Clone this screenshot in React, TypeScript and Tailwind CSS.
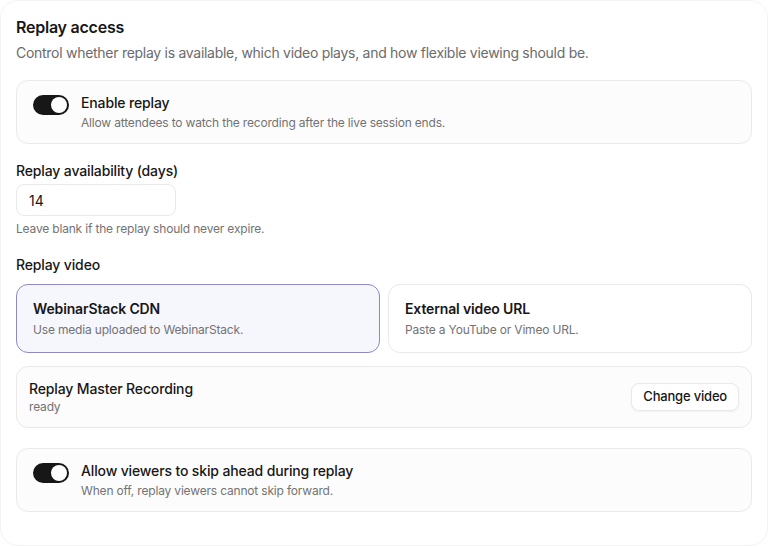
import { useState } from "react";

const Toggle = ({ on, onToggle }: { on: boolean; onToggle: () => void }) => (
  <button
    type="button"
    onClick={onToggle}
    className={`mt-0.5 flex h-5 w-9 shrink-0 items-center rounded-full p-0.5 ${
      on ? "bg-[#171717]" : "bg-[#d4d4d4]"
    }`}
  >
    <span
      className={`h-4 w-4 rounded-full bg-white shadow-sm ${on ? "ml-4" : "ml-0"}`}
    />
  </button>
);

const ToggleCard = ({
  title,
  hint,
  on,
  onToggle,
}: {
  title: string;
  hint: string;
  on: boolean;
  onToggle: () => void;
}) => (
  <div className="flex items-start gap-3 rounded-xl border border-[#e9e9e9] bg-[#fcfcfc] px-4 py-3">
    <Toggle on={on} onToggle={onToggle} />
    <div className="flex flex-col gap-0.5">
      <p className="text-sm leading-5 font-medium tracking-[-0.01em] text-[#171717]">{title}</p>
      <p className="text-xs leading-4 tracking-[-0.015em] text-[#737373]">{hint}</p>
    </div>
  </div>
);

const SourceOption = ({
  title,
  hint,
  selected,
  onSelect,
}: {
  title: string;
  hint: string;
  selected: boolean;
  onSelect: () => void;
}) => (
  <button
    type="button"
    onClick={onSelect}
    className={`flex flex-col items-start rounded-xl border px-4 py-3.5 text-left ${
      selected
        ? "border-[#8d8ac6] bg-[#f6f6fd]"
        : "border-[#e9e9e9] bg-white"
    }`}
  >
    <span className="text-sm leading-5 font-semibold tracking-[-0.01em] text-[#171717]">
      {title}
    </span>
    <span className="mt-[3px] text-xs leading-4 tracking-[-0.015em] text-[#737373]">
      {hint}
    </span>
  </button>
);

export default function App() {
  const [replayOn, setReplayOn] = useState(true);
  const [skipOn, setSkipOn] = useState(true);
  const [days, setDays] = useState("14");
  const [source, setSource] = useState<"cdn" | "external">("cdn");

  return (
    <div className="min-h-screen bg-white font-['Inter',sans-serif] text-[#171717]">
      <div className="flex h-[546px] flex-col rounded-[18px] border border-[#f3f3f3] px-[15px] pt-[14px]">
        <h2 className="text-base leading-6 font-semibold tracking-[-0.015em]">
          Replay access
        </h2>
        <p className="mt-1 text-sm leading-5 tracking-[-0.02em] text-[#6b6b6b]">
          Control whether replay is available, which video plays, and how flexible
          viewing should be.
        </p>

        <div className="mt-[17px]">
          <ToggleCard
            title="Enable replay"
            hint="Allow attendees to watch the recording after the live session ends."
            on={replayOn}
            onToggle={() => setReplayOn(!replayOn)}
          />
        </div>

        <label className="mt-[17px] text-sm leading-5 font-medium tracking-[-0.01em]">
          Replay availability (days)
        </label>
        <input
          value={days}
          onChange={(e) => setDays(e.target.value)}
          className="mt-[3px] h-8 w-40 rounded-lg border border-[#e9e9e9] bg-white px-3 text-sm text-[#171717] outline-none"
        />
        <p className="mt-[5px] text-xs leading-4 tracking-[-0.015em] text-[#737373]">
          Leave blank if the replay should never expire.
        </p>

        <p className="mt-[18px] text-sm leading-5 font-medium tracking-[-0.01em]">
          Replay video
        </p>
        <div className="mt-[9px] grid grid-cols-2 gap-2">
          <SourceOption
            title="WebinarStack CDN"
            hint="Use media uploaded to WebinarStack."
            selected={source === "cdn"}
            onSelect={() => setSource("cdn")}
          />
          <SourceOption
            title="External video URL"
            hint="Paste a YouTube or Vimeo URL."
            selected={source === "external"}
            onSelect={() => setSource("external")}
          />
        </div>

        <div className="mt-[13px] flex items-center justify-between rounded-xl border border-[#e9e9e9] bg-[#fcfcfc] px-3 py-3">
          <div className="flex flex-col">
            <p className="text-sm leading-5 font-medium tracking-[-0.01em]">
              Replay Master Recording
            </p>
            <p className="text-xs leading-4 tracking-[-0.015em] text-[#737373]">ready</p>
          </div>
          <button
            type="button"
            className="h-7 rounded-lg border border-[#e9e9e9] bg-white px-[11px] text-[13px] font-medium tracking-[-0.015em] text-[#171717] shadow-xs"
          >
            Change video
          </button>
        </div>

        <div className="mt-5">
          <ToggleCard
            title="Allow viewers to skip ahead during replay"
            hint="When off, replay viewers cannot skip forward."
            on={skipOn}
            onToggle={() => setSkipOn(!skipOn)}
          />
        </div>
      </div>
    </div>
  );
}
